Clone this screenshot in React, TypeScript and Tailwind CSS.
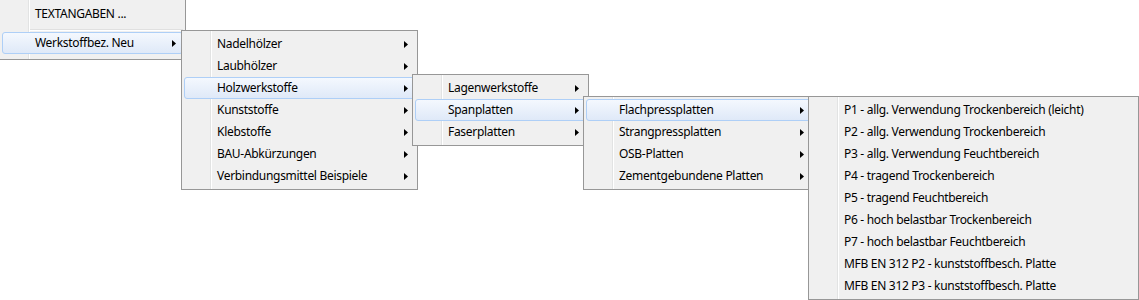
import React from "react";

type Item = { label: string; sub?: boolean };

const gutter =
  "bg-[#f0f0f0] bg-[linear-gradient(to_right,transparent_28px,#e2e3e3_28px,#e2e3e3_29px,#ffffff_29px,#ffffff_30px,transparent_30px)]";

function Arrow() {
  return (
    <svg width="4" height="7" viewBox="0 0 4 7" className="ml-auto mr-[6px] shrink-0">
      <path d="M0 0L4 3.5L0 7Z" fill="#000" />
    </svg>
  );
}

function MenuItem({ item, active }: { item: Item; active?: boolean }) {
  return (
    <div
      className={
        active
          ? "flex h-[22px] items-center rounded-[3px] border border-[#aecff7] bg-[linear-gradient(to_bottom,#f4f8fe,#dfe9f8)] pl-[32px]"
          : "flex h-[22px] items-center rounded-[3px] border border-transparent pl-[32px]"
      }
    >
      <span className="whitespace-nowrap">{item.label}</span>
      {item.sub && <Arrow />}
    </div>
  );
}

function Menu({
  className,
  items,
  active,
}: {
  className: string;
  items: Item[];
  active?: number;
}) {
  return (
    <div className={`absolute border border-[#979797] p-[2px] ${gutter} ${className}`}>
      {items.map((item, i) => (
        <MenuItem key={item.label} item={item} active={i === active} />
      ))}
    </div>
  );
}

const menu2: Item[] = [
  { label: "Nadelhölzer", sub: true },
  { label: "Laubhölzer", sub: true },
  { label: "Holzwerkstoffe", sub: true },
  { label: "Kunststoffe", sub: true },
  { label: "Klebstoffe", sub: true },
  { label: "BAU-Abkürzungen", sub: true },
  { label: "Verbindungsmittel Beispiele", sub: true },
];

const menu3: Item[] = [
  { label: "Lagenwerkstoffe", sub: true },
  { label: "Spanplatten", sub: true },
  { label: "Faserplatten", sub: true },
];

const menu4: Item[] = [
  { label: "Flachpressplatten", sub: true },
  { label: "Strangpressplatten", sub: true },
  { label: "OSB-Platten", sub: true },
  { label: "Zementgebundene Platten", sub: true },
];

const menu5: Item[] = [
  { label: "P1 - allg. Verwendung Trockenbereich (leicht)" },
  { label: "P2 - allg. Verwendung Trockenbereich" },
  { label: "P3 - allg. Verwendung Feuchtbereich" },
  { label: "P4 - tragend Trockenbereich" },
  { label: "P5 - tragend Feuchtbereich" },
  { label: "P6 - hoch belastbar Trockenbereich" },
  { label: "P7 - hoch belastbar Feuchtbereich" },
  { label: "MFB EN 312 P2 - kunststoffbesch. Platte" },
  { label: "MFB EN 312 P3 - kunststoffbesch. Platte" },
];

export default function App() {
  return (
    <div className="relative h-[300px] w-[1139px] overflow-hidden bg-white font-['Noto_Sans',sans-serif] text-[12px] tracking-[-0.3px] text-black">
      {/* root menu, top and left edge are cut off */}
      <div
        className={`absolute left-[-1px] top-[-1px] w-[187px] border border-[#979797] px-[2px] pb-[5px] pt-[3px] ${gutter}`}
      >
        <MenuItem item={{ label: "TEXTANGABEN ..." }} />
        <div className="ml-[28px] pb-[1px] pt-[4px]">
          <div className="h-px bg-[#e0e0e0]" />
          <div className="h-px bg-white" />
        </div>
        <MenuItem item={{ label: "Werkstoffbez. Neu", sub: true }} active />
      </div>

      <Menu className="left-[181px] top-[30px] w-[237px]" items={menu2} active={2} />
      <Menu className="left-[412px] top-[74px] w-[177px]" items={menu3} active={1} />
      <Menu className="left-[583px] top-[96px] w-[231px]" items={menu4} active={0} />
      <Menu className="left-[808px] top-[96px] w-[331px]" items={menu5} />
    </div>
  );
}
